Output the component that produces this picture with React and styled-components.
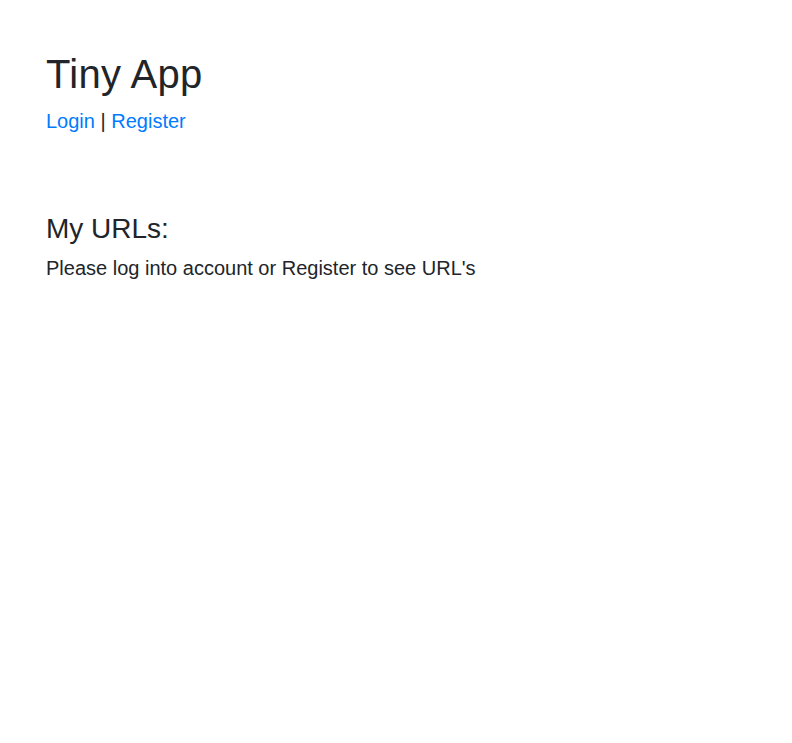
import React from 'react';
import styled, { createGlobalStyle } from 'styled-components';

const GlobalStyle = createGlobalStyle`
  body {
    margin: 0;
    background: #fff;
    color: #212529;
    font-family: "Liberation Sans", Arial, sans-serif;
    font-size: 16px;
    line-height: 1.5;
  }
`;

const Page = styled.div`
  padding: 50px 46px;
`;

const Header = styled.header`
  margin-bottom: 76px;
`;

const Title = styled.h1`
  margin: 0 0 8px;
  font-size: 40px;
  font-weight: 500;
  line-height: 1.2;
  letter-spacing: 0.3px;
`;

const Nav = styled.nav`
  font-size: 20px;
`;

const NavLink = styled.a`
  color: #007bff;
  text-decoration: none;
`;

const SectionTitle = styled.h3`
  margin: 0 0 7px;
  font-size: 28px;
  font-weight: 500;
  line-height: 1.2;
`;

const Message = styled.p`
  margin: 0;
  font-size: 20px;
`;

export default function App() {
  return (
    <>
      <GlobalStyle />
      <Page>
        <Header>
          <Title>Tiny App</Title>
          <Nav>
            <NavLink href="#">Login</NavLink> | <NavLink href="#">Register</NavLink>
          </Nav>
        </Header>
        <section>
          <SectionTitle>My URLs:</SectionTitle>
          <Message>Please log into account or Register to see URL's</Message>
        </section>
      </Page>
    </>
  );
}
